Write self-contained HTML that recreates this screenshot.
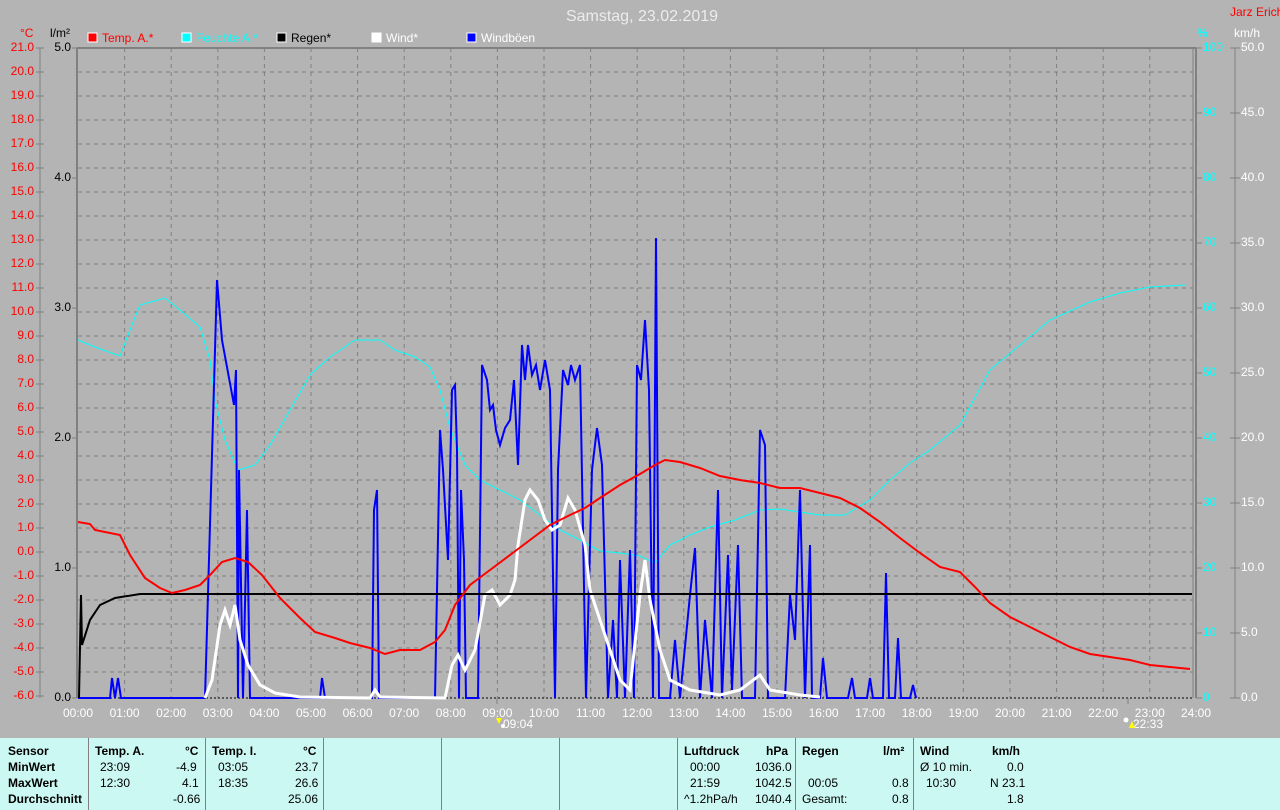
<!DOCTYPE html>
<html><head><meta charset="utf-8"><style>
html,body{margin:0;padding:0;background:#b4b4b4;}
body{width:1280px;height:810px;position:relative;overflow:hidden;font-family:"Liberation Sans",sans-serif;}
svg text{font-family:"Liberation Sans",sans-serif;}
#panel{position:absolute;left:0;top:738px;width:1280px;height:72px;background:#ccf8f4;font-size:12px;}
#panel div{position:absolute;white-space:nowrap;}
.b{font-weight:bold;}
.v{position:absolute;top:0;width:1px;height:72px;background:#808080;}
</style></head><body>
<svg width="1280" height="738" style="position:absolute;left:0;top:0">
<text x="642" y="21" font-size="16" fill="#ececec" text-anchor="middle">Samstag, 23.02.2019</text>
<text x="1230" y="16" font-size="12" fill="#ff0000">Jarz Erich</text>
<text x="20" y="37" font-size="12" fill="#ff0000">°C</text>
<text x="50" y="37" font-size="12" fill="#000">l/m²</text>
<text x="1197" y="37" font-size="12" fill="#00ffff">%</text>
<text x="1234" y="37" font-size="12" fill="#fff">km/h</text>
<g font-size="12">
<rect x="88" y="33" width="9" height="9" fill="#f00" stroke="#fff"/><text x="102" y="42" fill="#f00">Temp. A.*</text>
<rect x="182" y="33" width="9" height="9" fill="#0ff" stroke="#fff"/><text x="196" y="42" fill="#0ff">Feuchte A.*</text>
<rect x="277" y="33" width="9" height="9" fill="#000" stroke="#fff"/><text x="291" y="42" fill="#000">Regen*</text>
<rect x="372" y="33" width="9" height="9" fill="#fff" stroke="#fff"/><text x="386" y="42" fill="#fff">Wind*</text>
<rect x="467" y="33" width="9" height="9" fill="#00f" stroke="#fff"/><text x="481" y="42" fill="#fff">Windböen</text>
</g>
<!-- grid -->
<g stroke="#808080" stroke-width="1" stroke-dasharray="4,4">
<path d="M124.6 48V698M171.2 48V698M217.8 48V698M264.4 48V698M311 48V698M357.6 48V698M404.2 48V698M450.8 48V698M497.4 48V698M544 48V698M590.6 48V698M637.2 48V698M683.8 48V698M730.4 48V698M777 48V698M823.6 48V698M870.2 48V698M916.8 48V698M963.4 48V698M1010 48V698M1056.6 48V698M1103.2 48V698M1149.8 48V698"/>
<path d="M78 72H1193M78 96H1193M78 120H1193M78 144H1193M78 168H1193M78 192H1193M78 216H1193M78 240H1193M78 264H1193M78 288H1193M78 312H1193M78 336H1193M78 360H1193M78 384H1193M78 408H1193M78 432H1193M78 456H1193M78 480H1193M78 504H1193M78 528H1193M78 552H1193M78 576H1193M78 600H1193M78 624H1193M78 648H1193M78 672H1193"/>
</g>
<g stroke="#808080" fill="none">
<path d="M77 48V698M77 48H1196M1196 48V698" stroke-width="2"/>
<path d="M1193 48V698" stroke-width="1"/>
<path d="M40 48V698M1235 48V698" stroke-width="1"/>
</g>
<path d="M78 698H1193" stroke="#000" stroke-dasharray="2,2"/>
<!-- left temp axis -->
<g font-size="12" fill="#f00" text-anchor="end" dominant-baseline="middle">
<text x="34" y="48">21.0</text><text x="34" y="72">20.0</text><text x="34" y="96">19.0</text><text x="34" y="120">18.0</text><text x="34" y="144">17.0</text><text x="34" y="168">16.0</text><text x="34" y="192">15.0</text><text x="34" y="216">14.0</text><text x="34" y="240">13.0</text><text x="34" y="264">12.0</text><text x="34" y="288">11.0</text><text x="34" y="312">10.0</text><text x="34" y="336">9.0</text><text x="34" y="360">8.0</text><text x="34" y="384">7.0</text><text x="34" y="408">6.0</text><text x="34" y="432">5.0</text><text x="34" y="456">4.0</text><text x="34" y="480">3.0</text><text x="34" y="504">2.0</text><text x="34" y="528">1.0</text><text x="34" y="552">0.0</text><text x="34" y="576">-1.0</text><text x="34" y="600">-2.0</text><text x="34" y="624">-3.0</text><text x="34" y="648">-4.0</text><text x="34" y="672">-5.0</text><text x="34" y="696">-6.0</text>
</g>
<path d="M36 48h8M36 72h8M36 96h8M36 120h8M36 144h8M36 168h8M36 192h8M36 216h8M36 240h8M36 264h8M36 288h8M36 312h8M36 336h8M36 360h8M36 384h8M36 408h8M36 432h8M36 456h8M36 480h8M36 504h8M36 528h8M36 552h8M36 576h8M36 600h8M36 624h8M36 648h8M36 672h8M36 696h8" stroke="#808080"/>
<g font-size="12" fill="#000" text-anchor="end" dominant-baseline="middle">
<text x="71" y="48">5.0</text><text x="71" y="178">4.0</text><text x="71" y="308">3.0</text><text x="71" y="438">2.0</text><text x="71" y="568">1.0</text><text x="71" y="698">0.0</text>
</g>
<path d="M72 48h5M72 178h5M72 308h5M72 438h5M72 568h5M72 698h5" stroke="#808080"/>
<!-- right axes -->
<g font-size="12" fill="#00ffff" dominant-baseline="middle">
<text x="1203" y="48">100</text><text x="1203" y="113">90</text><text x="1203" y="178">80</text><text x="1203" y="243">70</text><text x="1203" y="308">60</text><text x="1203" y="373">50</text><text x="1203" y="438">40</text><text x="1203" y="503">30</text><text x="1203" y="568">20</text><text x="1203" y="633">10</text><text x="1203" y="698">0</text>
</g>
<g font-size="12" fill="#fff" dominant-baseline="middle">
<text x="1241" y="48">50.0</text><text x="1241" y="113">45.0</text><text x="1241" y="178">40.0</text><text x="1241" y="243">35.0</text><text x="1241" y="308">30.0</text><text x="1241" y="373">25.0</text><text x="1241" y="438">20.0</text><text x="1241" y="503">15.0</text><text x="1241" y="568">10.0</text><text x="1241" y="633">5.0</text><text x="1241" y="698">0.0</text>
</g>
<path d="M1196 48h6M1196 113h6M1196 178h6M1196 243h6M1196 308h6M1196 373h6M1196 438h6M1196 503h6M1196 568h6M1196 633h6M1196 698h6M1230 48h10M1230 113h10M1230 178h10M1230 243h10M1230 308h10M1230 373h10M1230 438h10M1230 503h10M1230 568h10M1230 633h10M1230 698h10" stroke="#808080"/>
<!-- hour labels -->
<g font-size="12" fill="#fff" text-anchor="middle">
<text x="78" y="717">00:00</text><text x="124.6" y="717">01:00</text><text x="171.2" y="717">02:00</text><text x="217.8" y="717">03:00</text><text x="264.4" y="717">04:00</text><text x="311" y="717">05:00</text><text x="357.6" y="717">06:00</text><text x="404.2" y="717">07:00</text><text x="450.8" y="717">08:00</text><text x="497.4" y="717">09:00</text><text x="544" y="717">10:00</text><text x="590.6" y="717">11:00</text><text x="637.2" y="717">12:00</text><text x="683.8" y="717">13:00</text><text x="730.4" y="717">14:00</text><text x="777" y="717">15:00</text><text x="823.6" y="717">16:00</text><text x="870.2" y="717">17:00</text><text x="916.8" y="717">18:00</text><text x="963.4" y="717">19:00</text><text x="1010" y="717">20:00</text><text x="1056.6" y="717">21:00</text><text x="1103.2" y="717">22:00</text><text x="1149.8" y="717">23:00</text><text x="1196" y="717">24:00</text>
<text x="518" y="728">09:04</text><text x="1148" y="728">22:33</text>
</g>
<path d="M497 698v6M1128 698v6" stroke="#808080"/>
<path d="M496 718l3 6 3-6z" fill="#ff0"/><circle cx="503" cy="726" r="2" fill="#fff"/>
<circle cx="1126" cy="720" r="2.5" fill="#fff"/><path d="M1129 728l3-7 3 7z" fill="#ff0"/>
<!-- data -->
<polyline fill="none" stroke="#00ffff" stroke-width="1" points="78,340 95,347 120,356 130,330 140,305 165,298 180,310 200,327 210,360 215,400 225,440 238,470 255,465 270,445 290,410 310,375 330,357 355,340 380,340 395,350 415,357 430,367 440,390 450,428 465,465 480,480 500,490 520,500 540,515 560,530 580,540 600,551 620,553 640,556 655,563 670,545 690,535 710,527 735,520 760,510 780,509 800,512 820,515 845,515 870,500 890,480 910,463 930,450 960,425 990,370 1020,345 1050,320 1090,302 1120,293 1150,287 1185,285"/>
<polyline fill="none" stroke="#0000ff" stroke-width="2" points="78,698 110,698 112,678 115,698 118,678 121,698 205,698 211,490 217,280 222,340 234,405 236,370 238,698 239,470 243,698 247,510 250,698 320,698 322,678 325,698 372,698 374,510 377,490 379,698 435,698 440,430 443,470 448,560 452,390 455,385 457,450 459,698 461,490 464,560 466,698 478,698 482,365 487,380 490,410 493,405 496,430 500,445 505,428 510,420 514,380 518,465 522,345 525,380 528,345 532,375 536,365 540,390 545,360 550,390 555,698 558,470 563,370 568,385 571,365 575,380 580,365 586,698 592,470 597,428 602,465 608,698 613,620 617,698 620,560 625,698 630,550 634,698 637,365 641,380 645,320 649,390 653,698 656,238 659,698 670,698 675,640 680,698 690,595 695,548 700,698 705,620 712,698 718,490 722,698 728,555 732,690 738,545 742,698 755,698 760,430 765,445 768,698 785,698 790,595 795,640 800,490 805,698 810,545 812,698 820,698 823,658 827,698 848,698 852,678 855,698 867,698 870,678 873,698 883,698 886,573 889,698 895,698 898,638 901,698 910,698 913,685 916,698"/>
<polyline fill="none" stroke="#ffffff" stroke-width="3" points="205,698 212,680 220,625 225,610 230,625 235,605 240,640 248,665 260,685 275,693 300,697 370,698 375,690 380,697 445,698 452,665 458,655 465,670 475,650 485,595 492,590 500,605 510,595 515,580 518,545 525,500 530,490 538,500 545,520 552,530 560,525 568,498 575,510 585,545 590,590 600,620 610,650 620,680 630,690 640,595 645,560 650,600 660,650 670,680 690,690 720,695 740,690 760,675 770,690 800,695 820,697"/>
<polyline fill="none" stroke="#000000" stroke-width="2" points="79,698 81,595 82,645 90,620 100,605 115,598 140,594 1192,594"/>
<polyline fill="none" stroke="#ff0000" stroke-width="2" points="78,522 90,524 95,530 120,535 130,555 145,578 160,588 172,593 185,590 200,585 210,575 222,562 235,558 248,562 262,575 280,598 300,618 315,632 335,638 350,643 370,648 385,654 400,650 420,650 435,642 445,630 455,605 470,585 490,570 510,555 530,540 550,525 570,515 585,508 600,498 620,485 640,474 655,465 665,460 680,462 700,468 720,476 740,480 760,483 780,488 800,488 820,493 840,498 860,508 880,522 900,538 920,553 940,567 960,572 975,587 990,603 1010,617 1030,627 1050,637 1070,647 1090,654 1110,657 1130,660 1150,665 1170,667 1190,669"/>
</svg>
<div id="panel">
<span class="v" style="left:88px"></span><span class="v" style="left:205px"></span><span class="v" style="left:323px"></span><span class="v" style="left:441px"></span><span class="v" style="left:559px"></span><span class="v" style="left:677px"></span><span class="v" style="left:795px"></span><span class="v" style="left:913px"></span>
<div class="b" style="left:8px;top:6px">Sensor</div>
<div class="b" style="left:8px;top:22px">MinWert</div>
<div class="b" style="left:8px;top:38px">MaxWert</div>
<div class="b" style="left:8px;top:54px">Durchschnitt</div>
<div class="b" style="left:95px;top:6px">Temp. A.</div><div class="b" style="left:185px;top:6px">°C</div>
<div style="left:100px;top:22px">23:09</div><div style="left:176px;top:22px">-4.9</div>
<div style="left:100px;top:38px">12:30</div><div style="left:182px;top:38px">4.1</div>
<div style="left:173px;top:54px">-0.66</div>
<div class="b" style="left:212px;top:6px">Temp. I.</div><div class="b" style="left:303px;top:6px">°C</div>
<div style="left:218px;top:22px">03:05</div><div style="left:295px;top:22px">23.7</div>
<div style="left:218px;top:38px">18:35</div><div style="left:295px;top:38px">26.6</div>
<div style="left:288px;top:54px">25.06</div>
<div class="b" style="left:684px;top:6px">Luftdruck</div><div class="b" style="left:766px;top:6px">hPa</div>
<div style="left:690px;top:22px">00:00</div><div style="left:755px;top:22px">1036.0</div>
<div style="left:690px;top:38px">21:59</div><div style="left:755px;top:38px">1042.5</div>
<div style="left:684px;top:54px">^1.2hPa/h</div><div style="left:755px;top:54px">1040.4</div>
<div class="b" style="left:802px;top:6px">Regen</div><div class="b" style="left:883px;top:6px">l/m²</div>
<div style="left:808px;top:38px">00:05</div><div style="left:892px;top:38px">0.8</div>
<div style="left:802px;top:54px">Gesamt:</div><div style="left:892px;top:54px">0.8</div>
<div class="b" style="left:920px;top:6px">Wind</div><div class="b" style="left:992px;top:6px">km/h</div>
<div style="left:920px;top:22px">Ø 10 min.</div><div style="left:1007px;top:22px">0.0</div>
<div style="left:926px;top:38px">10:30</div><div style="left:990px;top:38px">N 23.1</div>
<div style="left:1007px;top:54px">1.8</div>
</div>
</body></html>
